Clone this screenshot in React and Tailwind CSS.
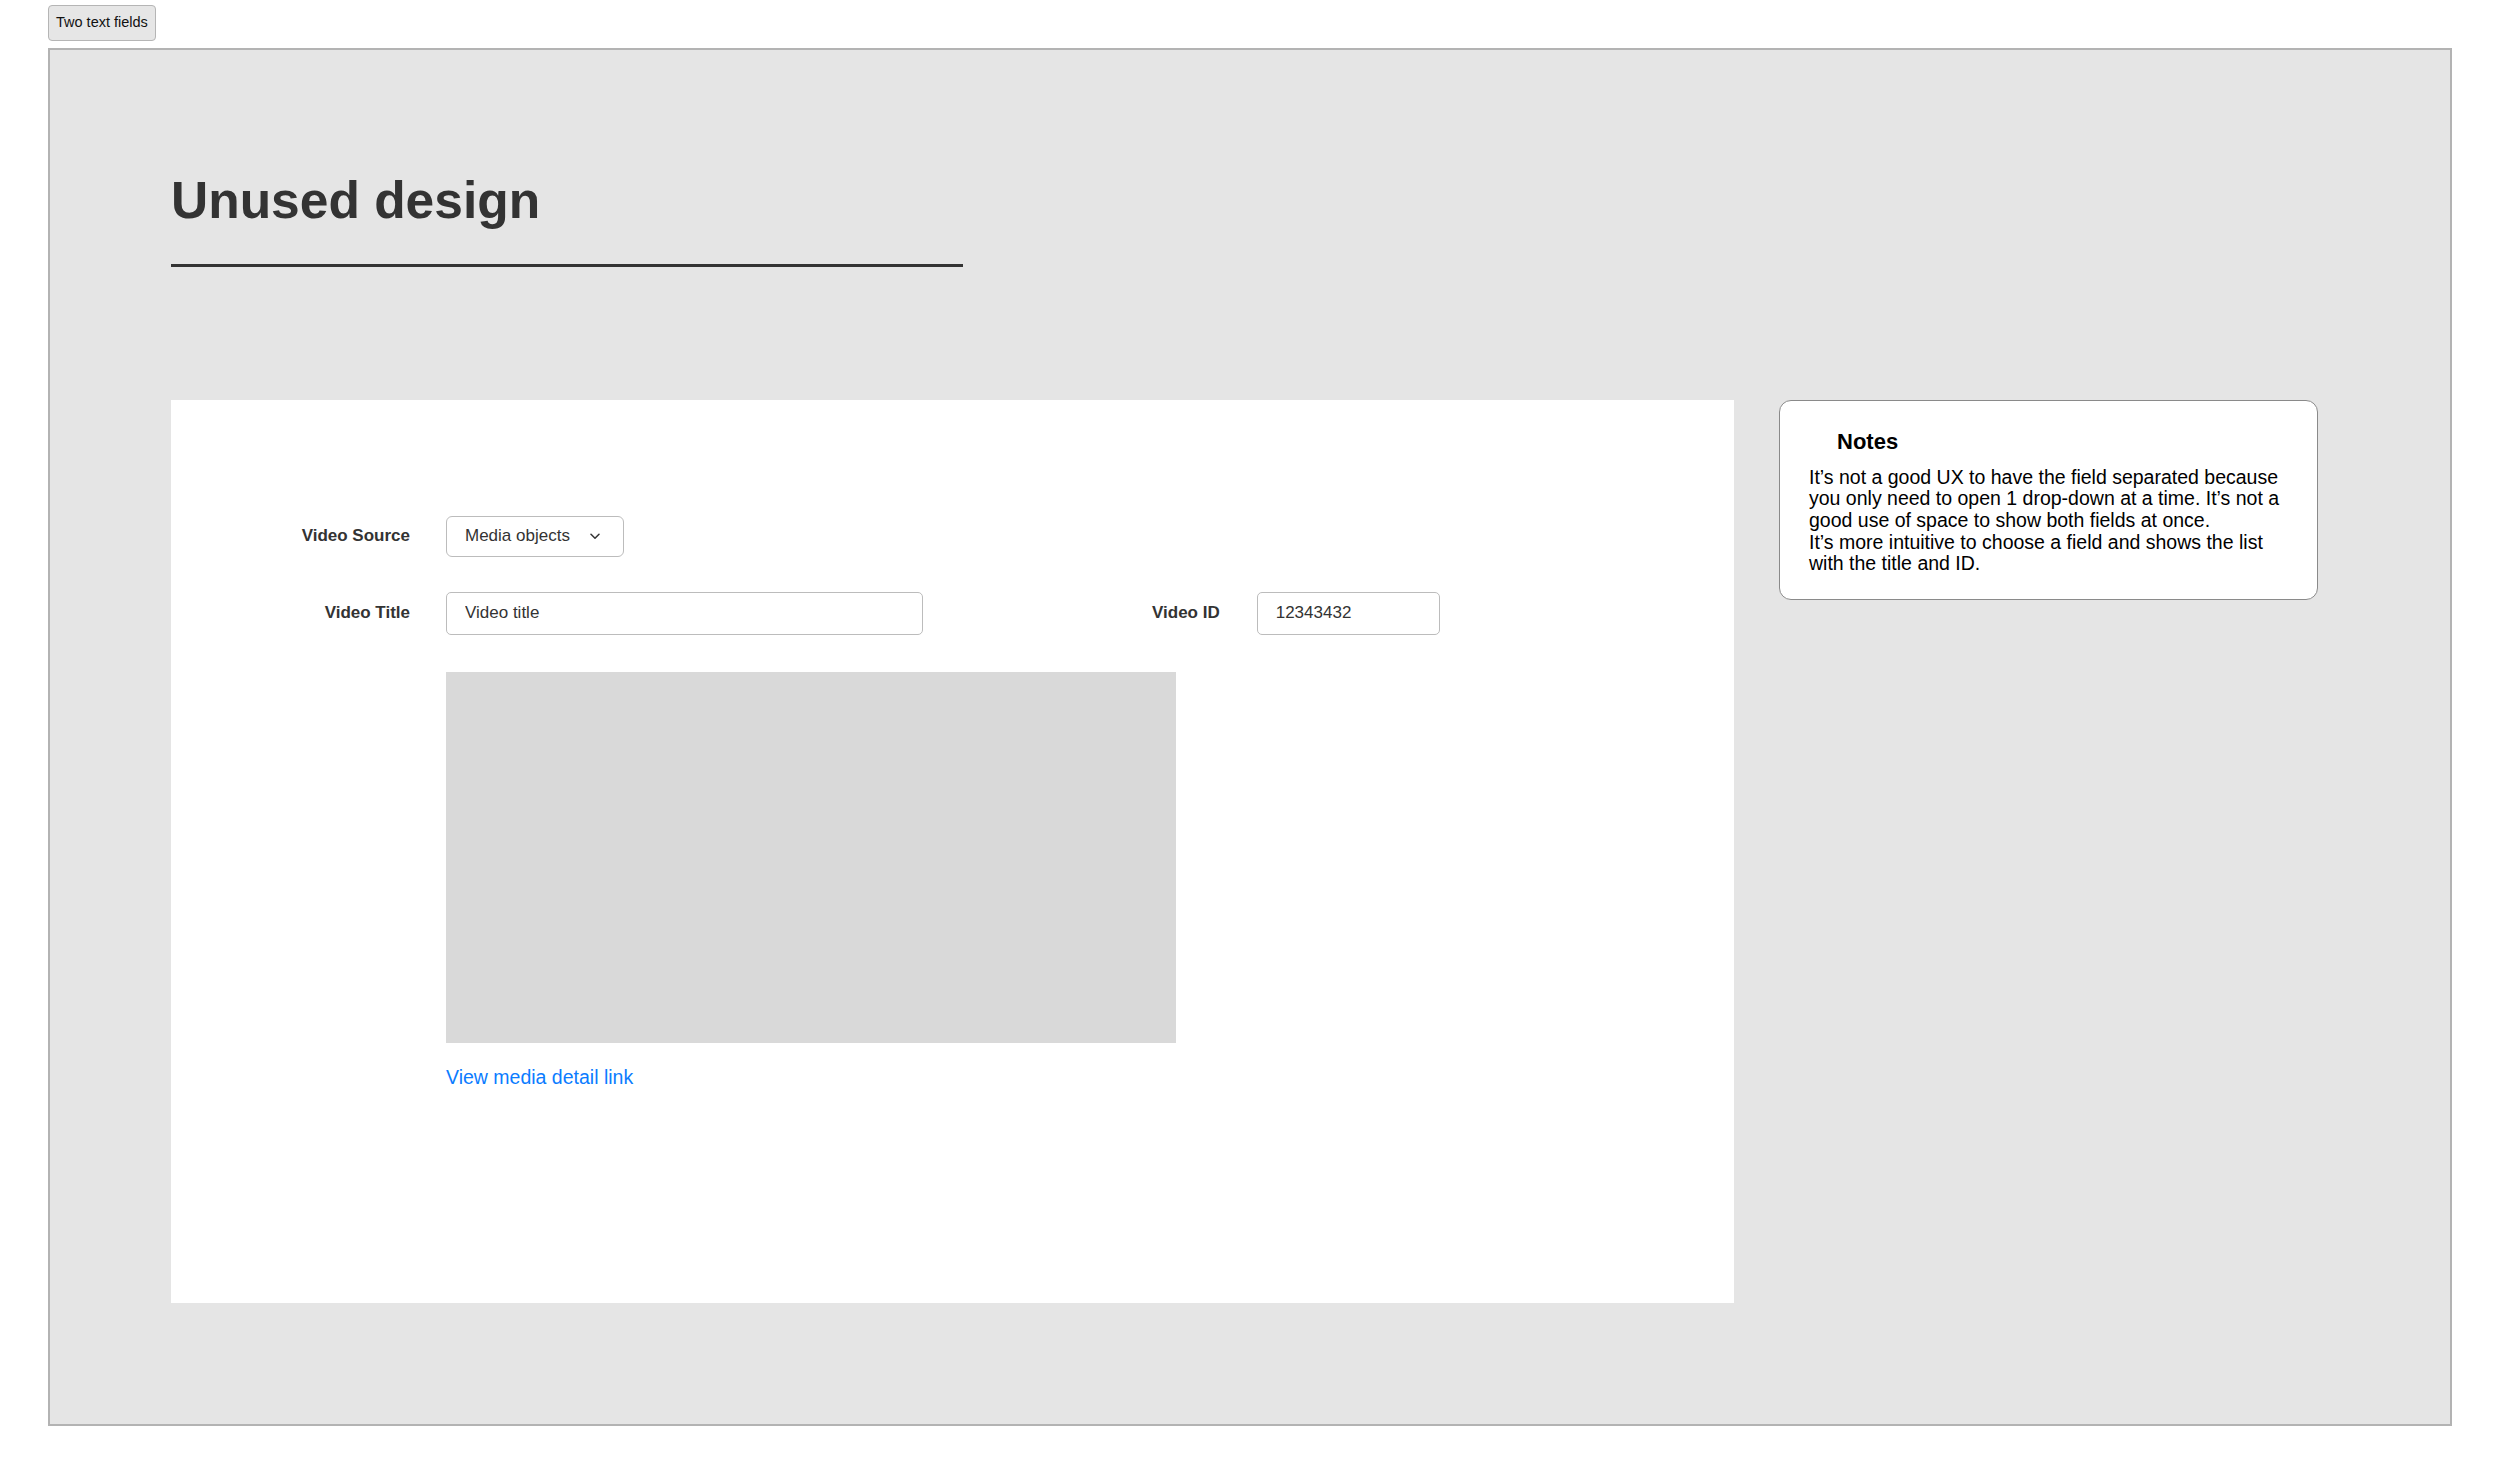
import React from 'react';

const Chevron = () => (
  <svg width="10" height="7" viewBox="0 0 10 7" fill="none" className="shrink-0">
    <path d="M1 1.2 L5 5.2 L9 1.2" stroke="#333" strokeWidth="1.5" strokeLinecap="round" strokeLinejoin="round" />
  </svg>
);

const App = () => {
  return (
    <div className="min-h-screen bg-white font-['Liberation_Sans',Arial,sans-serif] pt-[5px] pl-[48px]">
      {/* toggle */}
      <button className="h-[36px] px-[7px] rounded-[4px] border border-[#b5b5b5] bg-[#e6e6e6] text-[14.5px] text-[#111]">
        Two text fields
      </button>

      {/* frame */}
      <div className="mt-[7px] w-[2404px] h-[1378px] bg-[#e5e5e5] border-[2px] border-[#b3b3b3] pl-[121px] pt-[125px]">
        <h1 className="text-[51.5px] leading-none font-bold text-[#333]">Unused design</h1>
        <div className="mt-[37px] w-[792px] h-[3px] bg-[#333]" />

        <div className="mt-[133px] flex items-start gap-[45px]">
          {/* form panel */}
          <div className="w-[1563px] h-[903px] bg-white pt-[116px] text-[#333]">
            <div className="flex items-center">
              <label className="w-[239px] text-right text-[17px] font-bold">Video Source</label>
              <div className="ml-[36px] h-[41px] flex items-center gap-[20px] pl-[18px] pr-[23px] border-[1.5px] border-[#bcbcbc] rounded-[6px] text-[17px]">
                <span>Media objects</span>
                <Chevron />
              </div>
            </div>

            <div className="mt-[35px] flex items-center">
              <label className="w-[239px] text-right text-[17px] font-bold">Video Title</label>
              <input
                readOnly
                value="Video title"
                className="ml-[36px] w-[477px] h-[43px] pl-[18px] border-[1.5px] border-[#bcbcbc] rounded-[5px] text-[17px] text-[#333] outline-none"
              />
              <label className="ml-[229px] text-[17px] font-bold">Video ID</label>
              <input
                readOnly
                value="12343432"
                className="ml-[37px] w-[183px] h-[43px] pl-[18px] border-[1.5px] border-[#bcbcbc] rounded-[5px] text-[17px] text-[#333] outline-none"
              />
            </div>

            <div className="ml-[275px] mt-[37px] w-[730px] h-[371px] bg-[#d9d9d9]" />
            <div className="ml-[275px] mt-[23px]">
              <a href="#" className="text-[19.5px] leading-[22px] text-[#0b7cff]">View media detail link</a>
            </div>
          </div>

          {/* notes */}
          <div className="w-[539px] h-[200px] bg-white border border-[#8a8a8a] rounded-[12px] pt-[28px] pl-[29px] text-black">
            <div className="pl-[28px] text-[22px] leading-[26px] font-bold">Notes</div>
            <p className="mt-[12px] text-[19.5px] leading-[21.7px] whitespace-nowrap">
              It’s not a good UX to have the field separated because<br />
              you only need to open 1 drop-down at a time. It’s not a<br />
              good use of space to show both fields at once.<br />
              It’s more intuitive to choose a field and shows the list<br />
              with the title and ID.
            </p>
          </div>
        </div>
      </div>
    </div>
  );
};

export default App;
